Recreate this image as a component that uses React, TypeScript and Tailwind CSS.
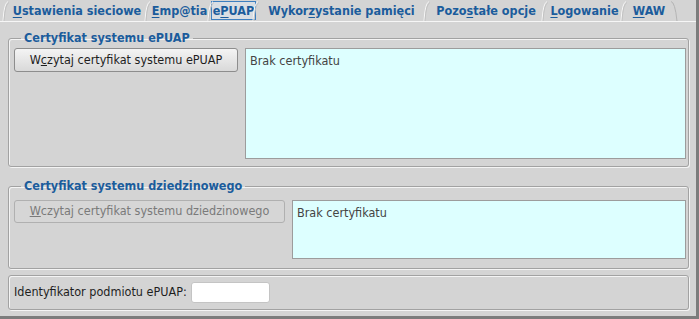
import * as React from "react";

const tabs = [
  { pre: "", u: "U", post: "stawienia sieciowe", w: "w-[142px]" },
  { pre: "", u: "E", post: "mp@tia", w: "w-[63px]" },
  { pre: "e", u: "P", post: "UAP", w: "w-[45px]", active: true },
  { pre: "Wykor", u: "z", post: "ystanie pamięci", w: "w-[171px]" },
  { pre: "Pozo", u: "s", post: "tałe opcje", w: "w-[118px]" },
  { pre: "", u: "L", post: "ogowanie", w: "w-[79px]" },
  { pre: "", u: "W", post: "AW", w: "w-[50px]", last: true },
];

function Slant({ right = false }: { right?: boolean }) {
  return (
    <svg
      width="8"
      height="20"
      viewBox="0 0 8 20"
      className={`absolute top-[1px] ${right ? "-right-[4px]" : "-left-[4px]"}`}
    >
      {right ? (
        <path d="M1 0.5 Q5 1 7 20" stroke="#b4b4b4" fill="none" />
      ) : (
        <>
          <path d="M1 20 Q2 2 6 0.5" stroke="#f6f6f6" fill="none" />
          <path d="M2 20 Q3 3 7 1.5" stroke="#c2c2c2" fill="none" />
        </>
      )}
    </svg>
  );
}

function Fieldset({
  legend,
  className,
  children,
}: {
  legend?: string;
  className: string;
  children: React.ReactNode;
}) {
  return (
    <fieldset
      className={`ml-[8px] mr-[7px] rounded-[3px] border border-[#a2a2a2] shadow-[1px_1px_0_#f4f4f4,inset_1px_1px_0_#f4f4f4] ${className}`}
    >
      {legend && (
        <legend className="ml-[7px] px-[3px] text-[12.5px] leading-[14px] font-bold text-[#1b5c9c]">
          {legend}
        </legend>
      )}
      {children}
    </fieldset>
  );
}

export default function App() {
  return (
    <div className="w-[699px] h-[319px] overflow-hidden bg-[#d4d4d4] border-r-[3px] border-b-[3px] border-[#7c7c7c] font-['DejaVu_Sans_Condensed','DejaVu_Sans',sans-serif] text-[12.5px] text-[#1e1e1e]">
      <div className="flex h-[21px] pl-[6px] items-stretch">
        {tabs.map((t) => (
          <div
            key={t.u + t.post}
            className={`relative flex items-center justify-center ${t.w}`}
          >
            <Slant />
            {t.last && <Slant right />}
            <span
              className={`font-bold text-[12.5px] leading-[15px] text-[#1b5c9c] ${
                t.active
                  ? "border border-[#3d7fc0] bg-[#d9dee4] px-[1px] py-[1px]"
                  : ""
              }`}
            >
              {t.pre}
              <span className="underline underline-offset-2">{t.u}</span>
              {t.post}
            </span>
          </div>
        ))}
      </div>
      <div className="border-t border-[#f6f6f6] pt-[9px]">
        <Fieldset legend="Certyfikat systemu ePUAP" className="pt-[3px] pl-[5px] pr-[2px] pb-[7px]">
          <div className="flex gap-[7px] items-start">
            <button className="w-[224px] h-[24px] shrink-0 rounded-[3px] border border-[#8d8d8d] bg-gradient-to-b from-[#f4f4f4] to-[#d9d9d9] text-[12.5px] text-[#1e1e1e]">
              W<span className="underline">c</span>zytaj certyfikat systemu ePUAP
            </button>
            <div className="flex-1 h-[111px] border border-[#9c9c9c] bg-[#ddffff] px-[4px] pt-[3px] text-[#444]">
              Brak certyfikatu
            </div>
          </div>
        </Fieldset>
        <Fieldset legend="Certyfikat systemu dziedzinowego" className="mt-[12px] pt-[7px] pl-[5px] pr-[2px] pb-[9px]">
          <div className="flex gap-[7px] items-start">
            <button
              disabled
              className="w-[271px] h-[23px] shrink-0 rounded-[3px] border border-[#b0b0b0] bg-[#d6d6d6] text-[12.5px] text-[#7a7a7a]"
            >
              <span className="underline">W</span>czytaj certyfikat systemu dziedzinowego
            </button>
            <div className="flex-1 h-[59px] border border-[#9c9c9c] bg-[#ddffff] px-[4px] pt-[3px] text-[#444]">
              Brak certyfikatu
            </div>
          </div>
        </Fieldset>
        <Fieldset className="mt-[6px] pt-[6px] pl-[5px] pb-[6px]">
          <div className="flex items-center gap-[4px]">
            <span>Identyfikator podmiotu ePUAP:</span>
            <input className="w-[79px] h-[21px] rounded-[3px] border border-[#c4c4c4] bg-white" />
          </div>
        </Fieldset>
      </div>
    </div>
  );
}
